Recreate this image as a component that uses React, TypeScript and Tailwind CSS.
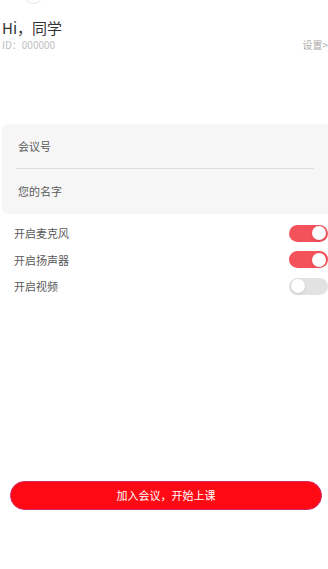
import { useState } from "react";

type ToggleRowPropsType = {
  label: string;
  on: boolean;
  onToggle: () => void;
};

const ToggleRow = ({ label, on, onToggle }: ToggleRowPropsType) => {
  return (
    <div className="h-[26.5px] flex justify-between items-center pl-[14px]">
      <span className="text-[11px] text-[#5a5a5a]">{label}</span>
      <button
        type="button"
        onClick={onToggle}
        className={`w-[39px] h-[17px] rounded-full flex items-center px-[2px] ${
          on ? "bg-[#f4525a] justify-end" : "bg-[#e2e2e2] justify-start"
        }`}
      >
        <span className="w-[14px] h-[14px] rounded-full bg-white shadow-sm" />
      </button>
    </div>
  );
};

const App = () => {
  const [mic, setMic] = useState(true);
  const [speaker, setSpeaker] = useState(true);
  const [video, setVideo] = useState(false);

  return (
    <div className="w-[328px] h-[569px] bg-white overflow-hidden flex flex-col font-['Noto_Sans_CJK_SC','Noto_Sans',sans-serif]">
      {/* 头像 (顶部被裁切) */}
      <div className="ml-[24px] -mt-[15px] w-[19px] h-[19px] rounded-full border border-[#e6e6e6] bg-white shrink-0" />

      <div className="mt-[14px] pl-[2px]">
        <p className="text-[15px] leading-[20px] text-[#333]">Hi，同学</p>
        <div className="flex justify-between items-center mt-[1px]">
          <span className="text-[10px] leading-[12px] text-[#c0c0c0]">ID：000000</span>
          <span className="text-[10px] leading-[12px] text-[#aaa]">设置&gt;</span>
        </div>
      </div>

      <div className="mt-[73px] ml-[2px] w-[330px] bg-[#f6f6f6] rounded-[6px] px-[14px]">
        <div className="h-[45px] flex items-center pl-[2px] border-b border-[#dedede] w-[298px]">
          <span className="text-[11px] text-[#5a5a5a]">会议号</span>
        </div>
        <div className="h-[45px] flex items-center pl-[2px]">
          <span className="text-[11px] text-[#5a5a5a]">您的名字</span>
        </div>
      </div>

      <div className="mt-[6px] flex flex-col">
        <ToggleRow label="开启麦克风" on={mic} onToggle={() => setMic(!mic)} />
        <ToggleRow label="开启扬声器" on={speaker} onToggle={() => setSpeaker(!speaker)} />
        <ToggleRow label="开启视频" on={video} onToggle={() => setVideo(!video)} />
      </div>

      <div className="flex-1" />

      <div className="px-[10px] pr-[6px] mb-[59px]">
        <button
          type="button"
          className="w-full h-[29px] rounded-full bg-[#ff0a14] border border-[#d2266a] text-white text-[11px]"
        >
          加入会议，开始上课
        </button>
      </div>
    </div>
  );
};

export default App;
